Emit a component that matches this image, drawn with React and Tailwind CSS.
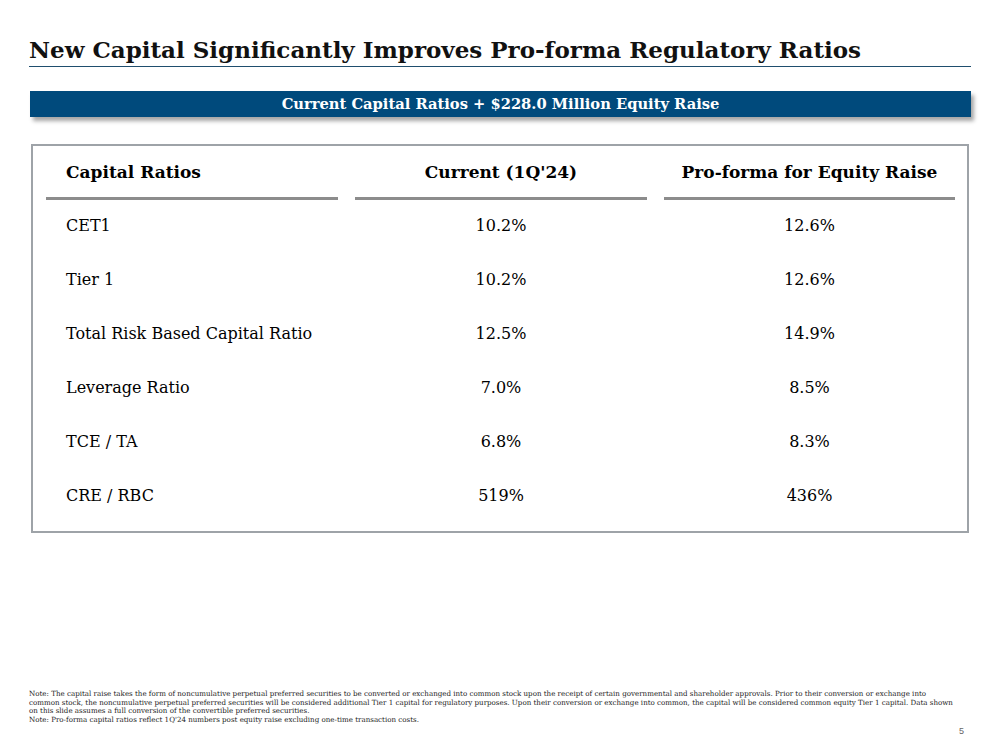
const rows = [
  ['CET1', '10.2%', '12.6%'],
  ['Tier 1', '10.2%', '12.6%'],
  ['Total Risk Based Capital Ratio', '12.5%', '14.9%'],
  ['Leverage Ratio', '7.0%', '8.5%'],
  ['TCE / TA', '6.8%', '8.3%'],
  ['CRE / RBC', '519%', '436%'],
];

const App = () => {
  return (
    <div className="w-[999px] h-[750px] bg-white relative overflow-hidden font-['DejaVu_Serif',serif] text-black">
      <div className="pl-[29px] pr-[28px] pt-[35px]">
        <h1 className="text-[23px] leading-[30px] font-bold text-[#111]">New Capital Significantly Improves Pro-forma Regulatory Ratios</h1>
        <div className="mt-[1px] h-px bg-[#1f4e6e]" />
      </div>

      <div className="ml-[30px] mr-[28px] mt-[24px] h-[26px] bg-[#004a7c] shadow-[3px_4px_4px_rgba(0,0,0,0.35)] flex items-center justify-center">
        <span className="text-white font-bold text-[14.7px]">Current Capital Ratios + $228.0 Million Equity Raise</span>
      </div>

      <div className="ml-[31px] mr-[30px] mt-[27px] h-[389px] border-2 border-[#9ea3a8] pt-[13px] px-[13px]">
        <div className="grid grid-cols-[292px_292px_291px] gap-x-[17px]">
          <div className="border-b-[3px] border-[#8c8c8c] h-[41px] flex items-end pb-[14px] pl-[20px] font-bold text-[17px] leading-[22px]">Capital Ratios</div>
          <div className="border-b-[3px] border-[#8c8c8c] h-[41px] flex items-end pb-[14px] justify-center font-bold text-[17px] leading-[22px]">Current (1Q'24)</div>
          <div className="border-b-[3px] border-[#8c8c8c] h-[41px] flex items-end pb-[14px] justify-center font-bold text-[17px] leading-[22px]">Pro-forma for Equity Raise</div>
        </div>
        <div className="-mt-[1px]">
          {rows.map((r, i) => (
            <div key={i} className="grid grid-cols-[292px_292px_291px] gap-x-[17px] h-[54px] items-center text-[16px]">
              <div className="pl-[20px]">{r[0]}</div>
              <div className="text-center">{r[1]}</div>
              <div className="text-center">{r[2]}</div>
            </div>
          ))}
        </div>
      </div>

      <div className="absolute left-[29px] top-[690px] w-[945px] text-[7.1px] leading-[8.5px] text-[#222]">
        <div className="whitespace-nowrap">Note: The capital raise takes the form of noncumulative perpetual preferred securities to be converted or exchanged into common stock upon the receipt of certain governmental and shareholder approvals. Prior to their conversion or exchange into</div>
        <div className="whitespace-nowrap">common stock, the noncumulative perpetual preferred securities will be considered additional Tier 1 capital for regulatory purposes. Upon their conversion or exchange into common, the capital will be considered common equity Tier 1 capital. Data shown</div>
        <div>on this slide assumes a full conversion of the convertible preferred securities.</div>
        <div>Note: Pro-forma capital ratios reflect 1Q'24 numbers post equity raise excluding one-time transaction costs.</div>
      </div>
      <div className="absolute left-[959px] top-[725px] text-[9px] text-[#666] font-['Liberation_Sans',sans-serif]">5</div>
    </div>
  );
};

export default App;
